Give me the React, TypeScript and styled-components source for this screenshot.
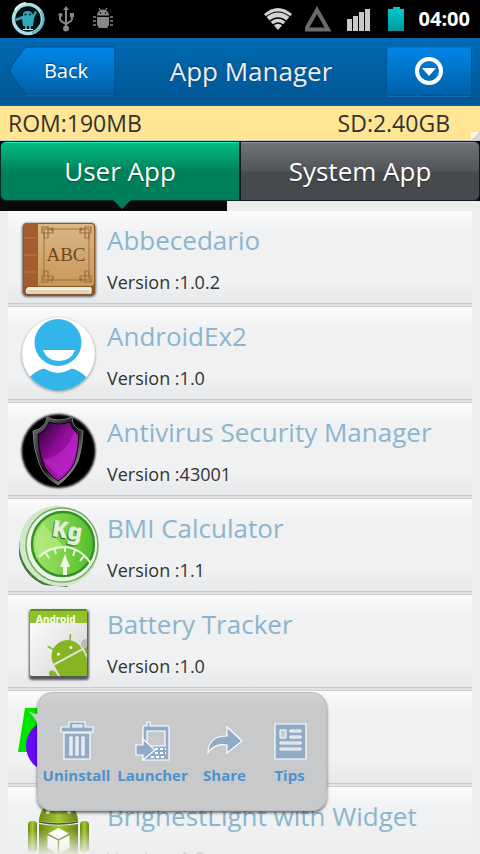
import React from "react";
import styled, { createGlobalStyle } from "styled-components";

const GlobalStyle = createGlobalStyle`
  * { box-sizing: border-box; }
  body { margin: 0; background: #ededed; }
  button { font: inherit; border: 0; padding: 0; margin: 0; cursor: pointer; background: none; }
  body, button { font-family: "Open Sans", "Noto Sans", sans-serif; }
`;

const Screen = styled.main`
  display: flex;
  flex-direction: column;
  height: 100vh;
  background: #ededed;
  overflow: hidden;
`;

const StatusBar = styled.div`
  display: flex;
  justify-content: space-between;
  align-items: center;
  flex: none;
  height: 38px;
  padding: 0 10px;
  background: #000;
`;

const StatusGroup = styled.div`
  display: flex;
  align-items: center;
  gap: 12px;
`;

const Clock = styled.time`
  color: #fff;
  font-size: 20px;
  line-height: 24px;
  font-weight: 700;
`;

const Header = styled.header`
  display: grid;
  grid-template-columns: 108px 1fr 86px;
  align-items: center;
  flex: none;
  height: 68px;
  padding: 0 8px;
  background: linear-gradient(#006bb4, #005593);
  border-bottom: 2px solid #0063ae;
`;

const BackButton = styled.button`
  display: grid;
  align-items: center;
  width: 108px;
  height: 50px;
  color: #fff;
  font-size: 20px;
  line-height: 26px;
  text-shadow: 0 -1px 1px #003c6e;
  > * { grid-area: 1 / 1; }
  > span { padding-left: 8px; }
`;

const Title = styled.h1`
  margin: 0;
  text-align: center;
  color: #eee;
  font-size: 26px;
  line-height: 36px;
  font-weight: 400;
  text-shadow: 0 -1px 2px #003c6e;
`;

const MenuButton = styled.button`
  display: flex;
  align-items: center;
  justify-content: center;
  width: 86px;
  height: 49px;
  border: 1px solid #00569a;
  border-top-color: #0a72c4;
  border-radius: 3px;
  background: linear-gradient(#0085e4, #0061a8);
  box-shadow: 0 1px 0 #1a6cab;
`;

const Storage = styled.div`
  position: relative;
  display: flex;
  justify-content: space-between;
  align-items: center;
  flex: none;
  height: 35px;
  padding: 0 30px 0 8px;
  background: #ffe594;
  border-bottom: 1px solid #c8c8c8;
  color: #333;
  font-size: 23px;
  line-height: 30px;
`;

const Curl = styled.svg`
  position: absolute;
  right: 0;
  bottom: 0;
`;

const Tabs = styled.div`
  display: flex;
  flex: none;
  height: 60px;
  background: #0a0a0a;
`;

const Tab = styled.button<{ $active?: boolean }>`
  position: relative;
  flex: 1;
  color: #fff;
  font-size: 26px;
  line-height: 36px;
  text-shadow: 0 1px 1px rgba(0, 0, 0, 0.4);
  border: 1px solid ${(p) => (p.$active ? "#062d22" : "#17181a")};
  border-radius: ${(p) => (p.$active ? "6px 0 0 6px" : "0 6px 6px 0")};
  background: ${(p) =>
    p.$active
      ? "linear-gradient(#00bd85, #008459 50%, #007f5b 52%, #007f5b)"
      : "linear-gradient(#707377, #505458 50%, #46494d 52%, #46494d)"};
  box-shadow: inset 0 1px 0 ${(p) => (p.$active ? "#19efb0" : "#909397")};
  &::after {
    content: ${(p) => (p.$active ? '""' : "none")};
    position: absolute;
    top: 100%;
    left: 50%;
    margin-left: -7px;
    border: 9px solid transparent;
    border-top: 9px solid #007f5b;
    border-bottom: 0;
  }
`;

const Strip = styled.div`
  flex: none;
  width: 227px;
  height: 10px;
  background: #0a0a0a;
`;

const ListArea = styled.section`
  position: relative;
  flex: 1;
  min-height: 0;
  overflow: hidden;
`;

const List = styled.ul`
  list-style: none;
  height: 100%;
  margin: 0;
  padding: 0 8px;
  overflow-y: auto;
  scrollbar-width: none;
`;

const Fade = styled.div`
  position: absolute;
  inset: auto 0 0 0;
  height: 24px;
  pointer-events: none;
  background: linear-gradient(rgba(237, 237, 237, 0), rgba(237, 237, 237, 0.9));
`;

const Row = styled.li`
  position: relative;
  display: flex;
  height: 96px;
  padding-left: 8px;
  border-bottom: 1px solid #cfcfcf;
  background: linear-gradient(#fbfbfb, #eff1f3 23px, #eff1f3 70px, #e7e8ea 92px, #cbcbcb 92px, #cbcbcb 93px, #e3e3e3 93px);
`;

const AppIcon = styled.div`
  flex: none;
  width: 91px;
  height: 92px;
`;

const AppText = styled.div`
  display: flex;
  flex-direction: column;
  gap: 12px;
  padding-top: 11px;
`;

const AppName = styled.h2`
  margin: 0;
  color: #8cb5cd;
  font-size: 26px;
  line-height: 36px;
  font-weight: 400;
  white-space: nowrap;
`;

const Version = styled.p`
  margin: 0;
  color: #333;
  font-size: 18px;
  line-height: 24px;
`;

const Popup = styled.div`
  position: absolute;
  z-index: 1;
  top: 1px;
  left: 29px;
  display: flex;
  width: 290px;
  height: 119px;
  padding: 26px 4px 0 3px;
  border: 1px solid #b9babc;
  border-radius: 15px;
  background: linear-gradient(#d2d3d4, #c8c9cb 14px, #c8c9cb);
  box-shadow: 0 2px 3px rgba(0, 0, 0, 0.55);
`;

const PopupTail = styled.svg`
  position: absolute;
  left: -10px;
  top: 18px;
`;

const Action = styled.button<{ $width: number }>`
  display: flex;
  flex-direction: column;
  align-items: center;
  flex: 0 0 ${(p) => p.$width}px;
  height: 72px;
  gap: 2px;
  color: #4c92cd;
  font-size: 15px;
  line-height: 20px;
  font-weight: 700;
`;

const Cyanogen = () => (
  <svg width="36" height="36" viewBox="0 0 36 36" aria-hidden="true">
    <circle cx="18" cy="18" r="14.500" fill="#001015" stroke="#a9dce4" strokeWidth="3.500" />
    <path d="M31 10a14.500 14.500 0 0 1-9 22" fill="none" stroke="#62b4c3" strokeWidth="2.500" />
    <path d="M5 9a15 15 0 0 1 11-7" fill="none" stroke="#e7fafb" strokeWidth="2" />
    <path d="M13 15q-1-5 5-5 4 0 5 4l2-4 2 1-3 6-1 8h-2v3h-2v-3h-2v3h-2v-3h-2l-1-7-6 2-1-2 7-3z" fill="#31a8b5" />
    <path d="M13 28.500h10" stroke="#ddd" />
    <circle cx="15.500" cy="13.500" r="1" fill="#012" /><circle cx="20" cy="13.500" r="1" fill="#012" />
  </svg>
);

const Usb = () => (
  <svg width="22" height="26" viewBox="0 0 22 26" aria-hidden="true">
    <g fill="none" stroke="#878787" strokeWidth="2"><path d="M8 3v19M2 9v4q0 2 6 5M14 9v4q0 2-6 5" /></g>
    <g fill="#878787"><path d="M8 0l3 4H5z" /><circle cx="8" cy="22.500" r="3" /><circle cx="2.500" cy="9" r="2" /><path d="M12 7h4v4h-4z" /></g>
  </svg>
);

const Debug = () => (
  <svg width="22" height="22" viewBox="0 0 22 22" aria-hidden="true">
    <g fill="#878787"><path d="M5 7.500a6 6 0 0 1 12 0zM5 9h12v8l-2 3H7l-2-3z" /></g>
    <path d="M7 0l2 3M15 0l-2 3" stroke="#878787" strokeWidth="1.200" />
    <path d="M1 9h3M1 13h3M1 17h3M18 9h3M18 13h3M18 17h3" stroke="#878787" strokeWidth="1.500" />
    <circle cx="8.500" cy="5" r="0.800" fill="#000" /><circle cx="13.500" cy="5" r="0.800" fill="#000" />
  </svg>
);

const Wifi = () => (
  <svg width="30" height="24" viewBox="0 0 30 24" aria-hidden="true">
    <path d="M15 23L1 7Q15-5 29 7z" fill="#d4d4d4" />
    <g fill="none" stroke="#000" strokeWidth="1.200"><path d="M2 10.500q13-11 26 0M6 15q9-8 18 0M9 19q6-6 12 0" /></g>
  </svg>
);

const Triangle = () => (
  <svg width="30" height="26" viewBox="2 0 30 26" aria-hidden="true">
    <path d="M14 4L25 23.500H3z" fill="none" stroke="#6b6b6b" strokeWidth="4" />
  </svg>
);

const Signal = () => (
  <svg width="28" height="23" viewBox="0 0 28 23" aria-hidden="true">
    <path d="M0 11h5v12H0zM6 8h5v15H6zM12 4h5v19h-5zM18 1h5v22h-5z" fill="#c9c9c9" />
  </svg>
);

const Battery = () => (
  <svg width="20" height="24" viewBox="-1 0 20 24" aria-hidden="true">
    <defs>
      <linearGradient id="battery" x2="0" y2="1"><stop stopColor="#00cdd3" /><stop offset="1" stopColor="#00979c" /></linearGradient>
    </defs>
    <path d="M5 0h7v2h4v22H0V2h5z" fill="url(#battery)" />
  </svg>
);

const BackShape = () => (
  <svg width="108" height="50" viewBox="0 0 108 50" aria-hidden="true">
    <defs>
      <linearGradient id="back" x2="0" y2="1"><stop stopColor="#0087e8" /><stop offset="1" stopColor="#0060a7" /></linearGradient>
    </defs>
    <path d="M19 1h86q2 0 2 2v43q0 2-2 2H19Q17 48 15 45L3 28q-2-4 0-7L15 4q2-3 4-3z" fill="url(#back)" stroke="#004b88" />
    <path d="M18 49h87" stroke="#1a6cab" />
  </svg>
);

const MenuIcon = () => (
  <svg width="28" height="28" viewBox="0 0 28 28" aria-hidden="true">
    <circle cx="14" cy="14" r="12" fill="none" stroke="#fff" strokeWidth="4" />
    <path d="M7 11h14l-7 8z" fill="#fff" />
  </svg>
);

const BookIcon = () => (
  <svg width="91" height="92" viewBox="0 0 91 92" aria-hidden="true">
    <defs>
      <linearGradient id="bookCover" x2="0" y2="1"><stop stopColor="#dbb788" /><stop offset="1" stopColor="#c79858" /></linearGradient>
      <filter id="soft"><feGaussianBlur stdDeviation="1.200" /></filter>
    </defs>
    <rect x="6" y="12" width="74" height="74" rx="5" fill="#444" opacity=".8" filter="url(#soft)" />
    <path d="M11 12h64q4 0 4 4v64q0 5-5 5H12q-5 0-5-5V16q0-4 4-4z" fill="#8b5526" />
    <path d="M8 15q0-3 4-3h10v63H12q-4 0-4 4z" fill="#a65b2d" />
    <path d="M22 13h53q3 0 3 3v56q0 3-3 3H22z" fill="url(#bookCover)" />
    <path d="M12 76h62q3 0 1 7H12q-3 0-2-5z" fill="#f2eedf" />
    <path d="M11 80h63M11 82h63" stroke="#c8bda0" />
    <path d="M8 27h13M8 44h13M8 61h13" stroke="#bd7950" />
    <rect x="28" y="18" width="45" height="51" fill="none" stroke="#9c703d" />
    <g fill="none" stroke="#9c703d" strokeWidth="1.200">
      <path id="corner" d="M26 16h6v6h-6zM32 18h5v4h-5v5h-4v-5M36 16v4" />
      <use href="#corner" transform="matrix(-1 0 0 1 101 0)" />
      <use href="#corner" transform="matrix(1 0 0 -1 0 87)" />
      <use href="#corner" transform="rotate(180 50.500 43.500)" />
    </g>
    <text x="50" y="50" textAnchor="middle" fontFamily="Liberation Serif, serif" fontSize="19" fill="#754519">ABC</text>
  </svg>
);

const PersonIcon = () => (
  <svg width="91" height="92" viewBox="0 0 91 92" aria-hidden="true">
    <defs><clipPath id="disc"><circle cx="42.500" cy="47" r="36.500" /></clipPath></defs>
    <circle cx="42.500" cy="48" r="37" fill="#777" opacity=".6" filter="url(#soft)" />
    <circle cx="42.500" cy="47" r="36.500" fill="#fff" />
    <g clipPath="url(#disc)" fill="#34b5ea">
      <path d="M13 71q5-6 13-9 3-1 5 1 11 6 22 0 2-2 5-1 8 3 13 9v20H13z" />
      <circle cx="42" cy="35.500" r="23.500" />
      <path d="M27 43h32q-4 11-16 11T27 43z" fill="#fff" />
      <path d="M13 72q11 12 29 12t30-12" fill="none" stroke="#238eb9" />
    </g>
  </svg>
);

const ShieldIcon = () => (
  <svg width="91" height="92" viewBox="0 0 91 92" aria-hidden="true">
    <defs>
      <linearGradient id="purple" x2="1" y2="1"><stop stopColor="#21002c" /><stop offset=".45" stopColor="#920e9a" /><stop offset="1" stopColor="#b816cf" /></linearGradient>
      <linearGradient id="steel" x2="1" y2="1"><stop stopColor="#777" /><stop offset=".5" stopColor="#111" /><stop offset="1" stopColor="#ddd" /></linearGradient>
    </defs>
    <circle cx="42.500" cy="48" r="37" fill="#000" filter="url(#soft)" />
    <path d="M31 14q11 6 25 0 0 11 11 14-1 18-5 30-7 15-20 24-15-9-19-22-6-15-6-32 13-3 14-14z" fill="url(#steel)" stroke="#777" />
    <path d="M33 19q10 4 21 0 2 8 9 12-1 20-5 30-6 11-16 17-12-9-15-18-5-13-5-29 9-4 11-12z" fill="url(#purple)" stroke="#0a000d" />
    <path d="M58 29l4 4q-1 20-7 29-6 8-12 12L27 57q23-5 31-28z" fill="#cf36dd" opacity=".4" />
  </svg>
);

const ScaleIcon = () => (
  <svg width="91" height="92" viewBox="0 0 91 92" aria-hidden="true">
    <defs>
      <linearGradient id="lime" x2="1" y2="0"><stop stopColor="#a4e36c" /><stop offset=".45" stopColor="#7fd44c" /><stop offset="1" stopColor="#4fbd28" /></linearGradient>
    </defs>
    <path d="M3 42v14q5 21 25 30l24 2L20 60z" fill="#3b7b33" />
    <ellipse cx="43" cy="47" rx="39" ry="41" transform="rotate(-35 43 47)" fill="#d3e6c9" />
    <ellipse cx="46" cy="46" rx="36" ry="37" fill="#edf6e6" stroke="#72ad65" strokeWidth="1.500" />
    <ellipse cx="47" cy="45" rx="31" ry="32" fill="url(#lime)" stroke="#35902a" strokeWidth="2.500" />
    <path d="M27 25l22 24q-14 1-26 9-8-17 4-33z" fill="#b8eb88" opacity=".7" />
    <path d="M23 58q9-10 26-10 16 1 26 17" fill="none" stroke="#ebf5d9" strokeWidth="2" />
    <path d="M29 53l4 6M38 49l2 6M49 48v5M59 51l-2 6M68 57l-4 5" fill="none" stroke="#ebf5d9" strokeWidth="2" />
    <path d="M47 76v-8h-3l5-13 5 13h-3v8z" fill="#eff8e2" />
    <g fontFamily="Noto Sans, sans-serif" fontWeight="900" fontSize="23">
      <text x="34" y="38" transform="rotate(9 34 38)" fill="#2c7924">Kg</text>
      <text x="35" y="37" transform="rotate(9 35 37)" fill="#e2efd5">Kg</text>
    </g>
  </svg>
);

const BatteryAppIcon = () => (
  <svg width="91" height="92" viewBox="0 0 91 92" aria-hidden="true">
    <defs>
      <linearGradient id="page" x2="1" y2="1"><stop stopColor="#fff" /><stop offset="1" stopColor="#d4d4d4" /></linearGradient>
      <clipPath id="pageClip"><rect x="14" y="14" width="57" height="67" rx="2" /></clipPath>
    </defs>
    <rect x="13" y="15" width="60" height="70" rx="3" fill="#333" opacity=".8" filter="url(#soft)" />
    <rect x="14" y="14" width="57" height="67" rx="2" fill="url(#page)" />
    <g clipPath="url(#pageClip)">
      <path d="M14 14h57v14H14z" fill="#91c22b" /><path d="M14 15h57" stroke="#5c8c12" strokeWidth="2" />
      <circle cx="70" cy="49" r="5" fill="#bbb" />
      <g transform="translate(52 62) rotate(-28)" fill="#86b522">
        <path d="M-16-1a16 16 0 0 1 32 0z" /><path d="M-16 1h32v35h-32zM-25 8q0-4 3-4t4 4v14h-7zM18 0h7v20h-7z" />
        <path d="M-9-13l-4-6M9-13l4-6" stroke="#86b522" strokeWidth="1.500" />
        <circle cx="-7" cy="-7" r="1.500" fill="#fff" /><circle cx="7" cy="-7" r="1.500" fill="#fff" />
      </g>
      <text x="20" y="28" fontFamily="Noto Sans, sans-serif" fontWeight="700" fontSize="10" fill="#fff">Android</text>
    </g>
  </svg>
);

const ShapesIcon = () => (
  <svg width="91" height="92" viewBox="0 0 91 92" aria-hidden="true">
    <path d="M9 17h35v44H2z" fill="#00e500" />
    <circle cx="36" cy="55" r="26" fill="#6808f5" />
  </svg>
);

const RobotIcon = () => (
  <svg width="91" height="92" viewBox="0 0 91 92" aria-hidden="true">
    <defs>
      <linearGradient id="robot" x2="1" y2="0"><stop stopColor="#6b8a17" /><stop offset=".5" stopColor="#a3c931" /><stop offset="1" stopColor="#678416" /></linearGradient>
    </defs>
    <g fill="url(#robot)">
      <path d="M23 34q1-18 19.500-18T62 34q-19 4-39 0z" />
      <path d="M23 37q19 3 39 0v35H23z" />
      <rect x="12" y="34" width="9" height="31" rx="4" /><rect x="64" y="34" width="9" height="31" rx="4" />
    </g>
    <path d="M23 35q19 4 39 0" stroke="#465c0c" strokeWidth="1.500" fill="none" />
    <circle cx="32" cy="25" r="2" fill="#fff" /><circle cx="53" cy="25" r="2" fill="#fff" />
    <path d="M42.500 41l11 6v14l-11 6-11-6V47z" fill="#fff" />
    <path d="M31 47l11.500 6L54 47M42.500 53v14" stroke="#6f8c1c" strokeWidth="1.500" fill="none" />
  </svg>
);

const TrashIcon = () => (
  <svg width="34" height="44" viewBox="0 0 34 44" aria-hidden="true">
    <g fill="#90aac8" stroke="#fff" strokeWidth="1.200">
      <path d="M1 8h8V3h16v5h8v5H1zM13 8h9V6h-9z" fillRule="evenodd" />
      <path d="M4 14h26v26H4z" /><path d="M10 18h2v18h-2zM16 18h2v18h-2zM22 18h2v18h-2z" fill="#c8c9cb" />
    </g>
  </svg>
);

const LauncherIcon = () => (
  <svg width="36" height="44" viewBox="0 0 36 44" aria-hidden="true">
    <path d="M8 41V7h4V3h3v4h19v34z" fill="#90aac8" stroke="#fff" strokeWidth="1.200" />
    <path d="M12 12h18v15H12z" fill="#c8c9cb" stroke="#fff" strokeWidth="1.200" />
    <path d="M20 30h11M20 34h11M16 38h15" stroke="#fff" strokeWidth="2" strokeDasharray="3 2" />
    <path d="M1 26h7v-6l12 11-12 10v-5H1z" fill="#90aac8" stroke="#fff" strokeWidth="1.200" />
  </svg>
);

const ShareIcon = () => (
  <svg width="36" height="44" viewBox="0 0 36 44" aria-hidden="true">
    <path d="M1 34Q1 17 20 17V8l15 14-15 12v-8Q7 24 1 34z" fill="#90aac8" stroke="#fff" strokeWidth="1.200" />
  </svg>
);

const TipsIcon = () => (
  <svg width="34" height="44" viewBox="0 0 34 44" aria-hidden="true">
    <path d="M2 5h31v35H2z" fill="#90aac8" stroke="#fff" strokeWidth="1.200" />
    <path d="M7 11h6v8H7zM17 11h11v2H17zM17 17h11v2H17zM7 23h21v2H7zM7 29h21v2H7z" fill="#c8c9cb" stroke="#fff" />
  </svg>
);

const apps = [
  { name: "Abbecedario", version: "1.0.2", Icon: BookIcon },
  { name: "AndroidEx2", version: "1.0", Icon: PersonIcon },
  { name: "Antivirus Security Manager", version: "43001", Icon: ShieldIcon },
  { name: "BMI Calculator", version: "1.1", Icon: ScaleIcon },
  { name: "Battery Tracker", version: "1.0", Icon: BatteryAppIcon },
  { name: "", version: "", Icon: ShapesIcon, open: true },
  { name: "BrighestLight with Widget", version: "1.0", Icon: RobotIcon },
];

const actions = [
  { label: "Uninstall", width: 71, Icon: TrashIcon },
  { label: "Launcher", width: 81, Icon: LauncherIcon },
  { label: "Share", width: 63, Icon: ShareIcon },
  { label: "Tips", width: 67, Icon: TipsIcon },
];

const ActionPopup = () => (
  <Popup role="menu">
    <PopupTail width="10" height="14" viewBox="0 0 10 14" aria-hidden="true">
      <path d="M0 0q6 3 10 3v11Q6 5 0 0z" fill="#c8c9cb" />
    </PopupTail>
    {actions.map(({ label, width, Icon }) => (
      <Action key={label} $width={width} role="menuitem"><Icon />{label}</Action>
    ))}
  </Popup>
);

export default function App() {
  return (
    <Screen>
      <GlobalStyle />
      <StatusBar>
        <StatusGroup><Cyanogen /><Usb /><Debug /></StatusGroup>
        <StatusGroup><Wifi /><Triangle /><Signal /><Battery /><Clock>04:00</Clock></StatusGroup>
      </StatusBar>
      <Header>
        <BackButton><BackShape /><span>Back</span></BackButton>
        <Title>App Manager</Title>
        <MenuButton aria-label="Menu"><MenuIcon /></MenuButton>
      </Header>
      <Storage>
        <span>ROM:190MB</span>
        <span>SD:2.40GB</span>
        <Curl width="9" height="9" viewBox="0 0 9 9" aria-hidden="true">
          <path d="M0 9L9 0v9z" fill="#d8d8d8" /><path d="M0 9V1h8z" fill="#fffaf0" />
        </Curl>
      </Storage>
      <Tabs role="tablist">
        <Tab role="tab" aria-selected="true" $active>User App</Tab>
        <Tab role="tab" aria-selected="false">System App</Tab>
      </Tabs>
      <Strip />
      <ListArea>
        <List>
          {apps.map(({ name, version, Icon, open }, i) => (
            <Row key={i}>
              <AppIcon><Icon /></AppIcon>
              {name && (
                <AppText>
                  <AppName>{name}</AppName>
                  <Version>Version :{version}</Version>
                </AppText>
              )}
              {open && <ActionPopup />}
            </Row>
          ))}
        </List>
        <Fade />
      </ListArea>
    </Screen>
  );
}
